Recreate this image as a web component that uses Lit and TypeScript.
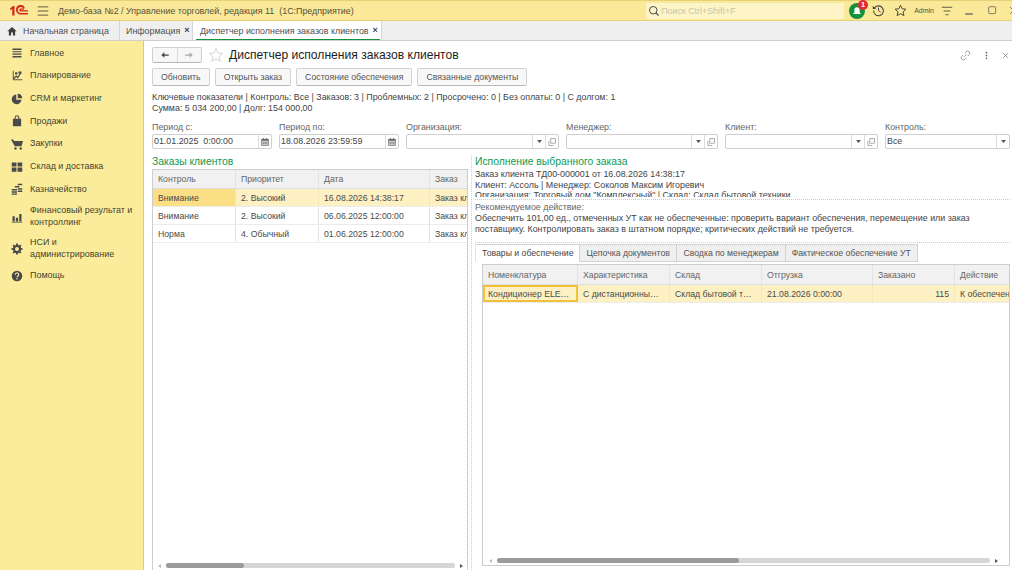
import { LitElement, html, css, svg } from "lit";
import { customElement } from "lit/decorators.js";

const ic = (body: unknown, size = 12, vb = 16) =>
  html`<svg width=${size} height=${size} viewBox="0 0 ${vb} ${vb}">${body}</svg>`;

const navIcons: Record<string, unknown> = {
  menu: svg`<path d="M2 2h12v2H2zM2 5.500h12v1.600H2zM2 8.700h12v1.600H2zM2 12h12v2H2z" fill="#4a4a4a"/>`,
  plan: svg`<path d="M3 1v12h12" fill="none" stroke="#4a4a4a" stroke-width="1.200"/><path d="M3 12l4-4 2 2 4-6" fill="none" stroke="#4a4a4a" stroke-width="1.600"/><rect x="5.500" y="3" width="3" height="3" fill="#4a4a4a"/><rect x="10" y="2" width="4" height="3" fill="#4a4a4a"/>`,
  crm: svg`<path d="M7 2a6.500 6.500 0 1 0 7 7H7z" fill="#4a4a4a"/><path d="M9 1a6 6 0 0 1 6 6H9z" fill="#4a4a4a"/>`,
  bag: svg`<path d="M2.500 5h11v10h-11z" fill="#4a4a4a"/><path d="M5.500 6V3.500a2.500 2.500 0 0 1 5 0V6" fill="none" stroke="#4a4a4a" stroke-width="1.400"/>`,
  cart: svg`<path d="M0 2h3l1 2h12l-2 7H5z" fill="#4a4a4a"/><circle cx="6" cy="14" r="1.600" fill="#4a4a4a"/><circle cx="13" cy="14" r="1.600" fill="#4a4a4a"/>`,
  wh: svg`<path d="M1 2h6.300v5.400H1zM8.700 2H15v5.400H8.700zM1 8.800h6.300v5.400H1zM8.700 8.800H15v5.400H8.700z" fill="#4a4a4a"/>`,
  cash: svg`<path d="M1 8h7v2H1zM1 11h7v2H1zM1 14h7v1.600H1zM5 4h6v2H5zM9 1h6v2H9zM9 7h6v2H9zM9 10h6v2H9z" fill="#4a4a4a"/>`,
  fin: svg`<path d="M2 7h3v7H2zM6.500 9h3v5h-3zM11 4h3v10h-3z" fill="#4a4a4a"/><path d="M1 15h14" stroke="#4a4a4a"/>`,
  gear: svg`<circle cx="8" cy="8" r="5.500" fill="#4a4a4a"/><path d="M8 .8v14.400M.8 8h14.400M2.900 2.900l10.200 10.200M13.100 2.900L2.900 13.100" stroke="#4a4a4a" stroke-width="2.600"/><circle cx="8" cy="8" r="2.600" fill="#fbec9b"/>`,
  help: svg`<circle cx="8" cy="8" r="7" fill="#4a4a4a"/><path d="M5.700 6.200a2.300 2.300 0 1 1 3.400 2c-.8.5-1.100.9-1.100 1.600" fill="none" stroke="#fbec9b" stroke-width="1.500"/><rect x="7.100" y="10.800" width="1.800" height="1.800" fill="#fbec9b"/>`,
};

const calendar = ic(svg`<path d="M2 3h12v11H2z" fill="#666"/><path d="M3 6h10v7H3z" fill="#ddd"/><path d="M4 7.500h2v1.500H4zM7 7.500h2v1.500H7zM10 7.500h2v1.500h-2zM4 10h2v1.500H4zM7 10h2v1.500H7zM10 10h2v1.500h-2z" fill="#666"/><path d="M5 1.500h1.400v2H5zM9.600 1.500H11v2H9.600z" fill="#666"/>`, 10);
const copy = ic(svg`<path d="M6 2.500h7.500V10H6z M3 6v7.500h7" fill="none" stroke="#888" stroke-width="1.100"/>`, 10);
const arrow = html`<svg width="5" height="3" viewBox="0 0 5 3"><path d="M0 0h5L2.500 3z" fill="#555"/></svg>`;

@customElement("app-root")
export class AppRoot extends LitElement {
  static styles = css`
    :host { display: block; width: 1024px; height: 581px; background: #fff; overflow: hidden;
      font-family: "Liberation Sans", Arial, sans-serif; font-size: 8.900px; color: #4a4a4a; }
    * { box-sizing: border-box; }
    .frame { width: 1012px; height: 570px; display: flex; flex-direction: column; overflow: hidden; background: #fff; }
    .top { height: 21px; flex: none; display: flex; align-items: center; background: #fbe99a;
      border-top: 1px solid #e6d277; border-bottom: 1px solid #e6d277; position: relative; }
    .logo { margin-left: 9px; width: 20px; height: 11px; flex: none; }
    .burger { margin-left: 8px; flex: none; display: flex; }
    .apptitle { margin-left: 9px; color: #55513a; white-space: nowrap; flex: 1; }
    .search { width: 198px; height: 16px; background: #fdf5c8; display: flex; align-items: center;
      padding-left: 2px; gap: 1px; color: #c9c5a4; flex: none; }
    .bell { margin-left: 5px; width: 16px; height: 16px; border-radius: 50%; background: #12923f; flex: none;
      position: relative; display: flex; align-items: center; justify-content: center; }
    .badge { position: absolute; top: -3px; right: -3px; width: 10px; height: 10px; border-radius: 50%;
      background: #e8262b; color: #fff; font-size: 7.500px; font-weight: bold; line-height: 10px; text-align: center; }
    .tool { flex: none; display: flex; }
    .hist { margin-left: 6.500px; }
    .starTop { margin-left: 9px; }
    .admin { margin-left: 7.500px; font-size: 7px; color: #55513a; flex: none; }
    .lines { margin-left: 7px; }
    .minb { margin-left: 10px; }
    .maxb { margin-left: 11.500px; }
    .closeb { margin-left: 10.500px; margin-right: -7px; }

    .tabs { height: 20px; flex: none; display: flex; background: #efefef; border-bottom: 1px solid #cfcfcf; }
    .tab { display: flex; align-items: center; padding: 0 6px; border-right: 1px solid #d5d5d5; white-space: nowrap; color: #4f4f4f; gap: 4px; }
    .tab.home { width: 120px; padding-left: 7px; gap: 6px; }
    .tab.info { width: 73px; }
    .tab.cur { width: 189px; background: #fff; position: relative; padding-left: 7px; }
    .tab.cur::after { content: ""; position: absolute; left: 3px; right: 1px; bottom: 0; height: 1px; background: #12923f; }
    .x { font-size: 9px; color: #444; line-height: 1; font-weight: bold; margin-left: auto; }

    .body { flex: 1; min-height: 0; display: flex; }
    .side { width: 144px; flex: none; background: #fbec9b; border-right: 1px solid #d9cb7c; padding-top: 1px; }
    .item { display: flex; align-items: center; padding: 5.700px 4px 5.700px 11px; color: #47442f; line-height: 11.300px; font-size: 8.950px; }
    .item.two { padding-top: 4.700px; padding-bottom: 4.700px; }
    .item .ico { width: 12px; height: 11px; flex: none; margin-right: 7px; display: flex; align-items: center; }

    .main { flex: 1; min-width: 0; padding: 6px 2px 0 8px; display: flex; flex-direction: column; }
    .titlerow { height: 16px; display: flex; align-items: center; flex: none; }
    .navg { width: 50px; height: 16px; border: 1px solid #cfcfcf; border-bottom-color: #b5b5b5; border-radius: 2px; display: flex; flex: none; background: #f7f7f7; }
    .navg span { flex: 1; display: flex; align-items: center; justify-content: center; }
    .navg span + span { border-left: 1px solid #d8d8d8; }
    .fav { margin: 0 5px 0 6px; display: flex; flex: none; }
    h1 { margin: 0; font-size: 12.100px; font-weight: normal; color: #1c1c1c; white-space: nowrap; flex: 1; line-height: 16px; }
    .acts { display: flex; align-items: center; gap: 10.500px; }
    .btns { display: flex; gap: 5px; margin-top: 5px; flex: none; }
    .btn { height: 18px; padding: 0 8px; border: 1px solid #d2d2d2; border-bottom-color: #b9b9b9; border-radius: 2px;
      background: #f8f8f8; display: flex; align-items: center; color: #555; white-space: nowrap; font-size: 8.750px; }
    .kpi { margin-top: 6px; line-height: 10.500px; color: #444; flex: none; white-space: nowrap; }
    .filters { display: grid; grid-template-columns: 120px 120px 153px 152px 153px 125px; column-gap: 7px; margin-top: 9px; flex: none; }
    .filters .f { display: flex; flex-direction: column; }
    .f label { line-height: 11px; color: #666; height: 12px; }
    .input { height: 15px; border: 1px solid #cfcfcf; border-radius: 2px; display: flex; align-items: stretch; background: #fff; color: #444; }
    .input .v { flex: 1; padding-left: 1px; line-height: 13px; white-space: pre; overflow: hidden; }
    .input .b { flex: none; width: 13px; border-left: 1px solid #dcdcdc; display: flex; align-items: center; justify-content: center; }

    .split { flex: 1; min-height: 0; display: flex; margin-top: 6px; }
    .left { width: 316px; flex: none; display: flex; flex-direction: column; }
    .gut { width: 4px; flex: none; border-right: 1px dotted #ccc; }
    .right { flex: 1; min-width: 0; padding-left: 3px; display: flex; flex-direction: column; }
    h2 { margin: 0; font-size: 10.350px; font-weight: normal; color: #0b9a50; line-height: 13px; height: 13px; flex: none; white-space: nowrap; }
    .left h2 { height: 14px; }
    .grid { flex: 1; min-height: 0; border: 1px solid #cdcdcd; display: flex; flex-direction: column; overflow: hidden; font-size: 8.700px; }
    .left .grid { border-bottom: 0; }
    .hr, .r { display: flex; flex: none; }
    .hr { height: 19px; background: #f1f1f1; border-bottom: 1px solid #dedede; color: #666; }
    .pane .hr { height: 20px; }
    .r { height: 18px; border-bottom: 1px solid #ececec; color: #4a4a4a; }
    .c { padding: 0 5px; border-right: 1px solid #e2e2e2; display: flex; align-items: center; white-space: nowrap; overflow: hidden; flex: none; }
    .c:last-child { border-right: 0; flex: 1; min-width: 0; }
    .c.num { justify-content: flex-end; }
    .r.sel { background: #fdf1c3; }
    .r.sel .c { border-right-color: #f4e8bb; }
    .c.focus { background: #fbdf85; }
    .c.cursor { background: #fdf1c3; outline: 2px solid #f2c13c; outline-offset: -2px; }
    .fill { flex: 1; }
    .sb { flex: none; display: flex; align-items: center; height: 9px; padding: 0 4px 0 5px; gap: 5px; }
    .pane .sb { padding: 0 11px 0 6px; }
    .sb .track { flex: 1; height: 5px; border-radius: 3px; background: #d6d6d6; }
    .sb .thumb { height: 5px; border-radius: 3px; background: #9b9b9b; }
    .sb i { flex: none; width: 0; height: 0; border-top: 2px solid transparent; border-bottom: 2px solid transparent; }
    .sb i.l { border-right: 3px solid #bbb; }
    .sb i.g { border-left: 3px solid #555; }

    .details { height: 28px; overflow: hidden; line-height: 10.500px; color: #444; flex: none; margin-top: 1px; white-space: nowrap; }
    .rec { border-top: 1px dotted #ccc; border-bottom: 1px dotted #ccc; margin-top: 2px; padding: 2px 0 0; height: 44px; flex: none; line-height: 10.500px; }
    .rec .h { color: #666; height: 11px; }
    .rec .t { color: #444; }
    .rtabs { display: flex; flex: none; margin-top: 1px; height: 18px; font-size: 8.700px; }
    .rt { height: 18px; padding: 0 6.500px; display: flex; align-items: center; background: #efefef; border: 1px solid #d2d2d2; border-left: 0; white-space: nowrap; color: #555; }
    .rt.tight { padding: 0 6px; }
    .rt.on { background: #fff; border-left: 1px solid #e2e2e2; border-bottom-color: #fff; color: #444; padding: 0 5.500px 0 6px; }
    .pane { flex: 1; min-height: 0; padding: 2px 0 0 7px; margin-bottom: 4px; display: flex; flex-direction: column; }
  `;

  render() {
    const menu: [string, string, boolean?][] = [
      ["menu", "Главное"], ["plan", "Планирование"], ["crm", "CRM и маркетинг"], ["bag", "Продажи"],
      ["cart", "Закупки"], ["wh", "Склад и доставка"], ["cash", "Казначейство"],
      ["fin", "Финансовый результат и контроллинг", true], ["gear", "НСИ и администрирование", true], ["help", "Помощь"],
    ];
    const lw = [83, 83, 111, 37];
    const rows = [
      ["Внимание", "2. Высокий", "16.08.2026 14:38:17", "Заказ клиента"],
      ["Внимание", "2. Высокий", "06.06.2025 12:00:00", "Заказ клиента"],
      ["Норма", "4. Обычный", "01.06.2025 12:00:00", "Заказ клиента"],
    ];
    const rw = [95, 92, 92, 111, 82, 60];
    const field = (label: string, val: string, extras: unknown[]) => html`
      <div class="f"><label>${label}</label>
        <div class="input"><span class="v">${val}</span>${extras.map((e) => html`<span class="b">${e}</span>`)}</div></div>`;

    return html`<div class="frame">
      <div class="top">
        <svg class="logo" viewBox="0 0 20 11"><path d="M1 3.500l3-2.500h1.500v9.500H3.300V4L1.500 5.300z" fill="#d8261c"/><path d="M16 3.200A4.600 4.600 0 0 0 7 4.500c0 3.300 2.400 5 4.800 5H19V8h-7.200C9.800 8 8.800 6.500 8.800 5c0-2 1.500-3 3-3 1.200 0 2 .5 2.500 1.500zM11.800 3.600c-1 0-1.600.7-1.600 1.400 0 .9.700 1.500 1.600 1.500H19V5.300h-7c-.3 0-.4-.1-.4-.3s.2-.3.4-.3h2.900l-.2-1.100z" fill="#d8261c"/></svg>
        <span class="burger">${ic(svg`<path d="M1 2.500h14M1 8h14M1 13.500h14" stroke="#5c5842" stroke-width="1.300"/>`, 12)}</span>
        <span class="apptitle">Демо-база №2 / Управление торговлей, редакция 11 &nbsp;(1С:Предприятие)</span>
        <div class="search">${ic(svg`<circle cx="7" cy="7" r="5" fill="none" stroke="#444" stroke-width="1.300"/><path d="M10.500 10.500l3.500 3.500" stroke="#444" stroke-width="1.600"/>`, 12)}<span>Поиск Ctrl+Shift+F</span></div>
        <div class="bell">${ic(svg`<path d="M8 3a3.500 3.500 0 0 1 3.500 3.500V10l2 2h-11l2-2V6.500A3.500 3.500 0 0 1 8 3z" fill="#fff"/>`, 12)}<span class="badge">1</span></div>
        <span class="tool hist">${ic(svg`<path d="M3 5a6 6 0 1 1-1 3" fill="none" stroke="#444" stroke-width="1.300"/><path d="M1 2v4h4z" fill="#444"/><path d="M8 4.500V8l2.500 2" fill="none" stroke="#444" stroke-width="1.200"/>`, 13)}</span>
        <span class="tool starTop">${ic(svg`<path d="M8 1.500l2 4.400 4.700.5-3.500 3.200 1 4.700L8 11.900l-4.200 2.400 1-4.700L1.300 6.400 6 5.900z" fill="none" stroke="#444" stroke-width="1.200"/>`, 13)}</span>
        <span class="admin">Admin</span>
        <span class="tool lines">${ic(svg`<path d="M1 3h14M3.500 8h9M6 13h4" stroke="#5c5842" stroke-width="1.300"/>`, 12)}</span>
        <span class="tool minb">${ic(svg`<path d="M3 12h10" stroke="#555" stroke-width="1.600"/>`, 12)}</span>
        <span class="tool maxb">${ic(svg`<rect x="2.500" y="2.500" width="10" height="10" rx="1" fill="none" stroke="#666" stroke-width="1.200"/>`, 11)}</span>
        <span class="tool closeb">${ic(svg`<path d="M3 3l10 10M13 3L3 13" stroke="#666" stroke-width="1.200"/>`, 11)}</span>
      </div>
      <div class="tabs">
        <div class="tab home">${ic(svg`<path d="M8 1.500L.5 8.500h2.500V15h3.500v-4.500h3V15H13V8.500h2.500z" fill="#3d3d3d"/>`, 10)}<span>Начальная страница</span></div>
        <div class="tab info"><span>Информация</span><span class="x">×</span></div>
        <div class="tab cur"><span>Диспетчер исполнения заказов клиентов</span><span class="x">×</span></div>
      </div>
      <div class="body">
        <nav class="side">
          ${menu.map(([i, t, two]) => html`<div class="item ${two ? "two" : ""}"><span class="ico">${ic(navIcons[i])}</span><span>${t}</span></div>`)}
        </nav>
        <main class="main">
          <div class="titlerow">
            <div class="navg">
              <span>${ic(svg`<path d="M2 8l5-4.500V7h7v2H7v3.500z" fill="#444"/>`, 10)}</span>
              <span>${ic(svg`<path d="M14 8L9 3.500V7H2v2h7v3.500z" fill="#aaa"/>`, 10)}</span>
            </div>
            <span class="fav">${ic(svg`<path d="M8 1.500l2 4.400 4.700.5-3.500 3.200 1 4.700L8 11.900l-4.200 2.400 1-4.700L1.300 6.400 6 5.900z" fill="none" stroke="#d0d0d0" stroke-width=".9"/>`, 16)}</span>
            <h1>Диспетчер исполнения заказов клиентов</h1>
            <div class="acts">
              ${ic(svg`<path d="M6.500 9.500l3-3M7 4.500l2-2a3 3 0 0 1 4.300 4.300l-2 2M9 11.500l-2 2a3 3 0 0 1-4.300-4.300l2-2" fill="none" stroke="#888" stroke-width="1.200"/>`, 11)}
              ${ic(svg`<circle cx="8" cy="3" r="1.500" fill="#666"/><circle cx="8" cy="8" r="1.500" fill="#666"/><circle cx="8" cy="13" r="1.500" fill="#666"/>`, 9)}
              ${ic(svg`<path d="M4 4l8 8M12 4l-8 8" stroke="#777" stroke-width="1.300"/>`, 9)}
            </div>
          </div>
          <div class="btns">
            <div class="btn">Обновить</div>
            <div class="btn">Открыть заказ</div>
            <div class="btn">Состояние обеспечения</div>
            <div class="btn">Связанные документы</div>
          </div>
          <div class="kpi">Ключевые показатели | Контроль: Все | Заказов: 3 | Проблемных: 2 | Просрочено: 0 | Без оплаты: 0 | С долгом: 1<br />Сумма: 5 034 200,00 | Долг: 154 000,00</div>
          <div class="filters">
            ${field("Период с:", "01.01.2025  0:00:00", [calendar])}
            ${field("Период по:", "18.08.2026 23:59:59", [calendar])}
            ${field("Организация:", "", [arrow, copy])}
            ${field("Менеджер:", "", [arrow, copy])}
            ${field("Клиент:", "", [arrow, copy])}
            ${field("Контроль:", "Все", [arrow])}
          </div>
          <div class="split">
            <section class="left">
              <h2>Заказы клиентов</h2>
              <div class="grid">
                <div class="hr">${["Контроль", "Приоритет", "Дата", "Заказ"].map((t, i) => html`<div class="c" style="width:${lw[i]}px">${t}</div>`)}</div>
                ${rows.map((r, ri) => html`<div class="r ${ri === 0 ? "sel" : ""}">${r.map((t, i) => html`<div class="c ${ri === 0 && i === 0 ? "focus" : ""}" style="width:${lw[i]}px">${t}</div>`)}</div>`)}
                <div class="fill"></div>
                <div class="sb"><i class="l"></i><div class="track"><div class="thumb" style="width:27%"></div></div><i class="g"></i></div>
              </div>
            </section>
            <div class="gut"></div>
            <section class="right">
              <h2>Исполнение выбранного заказа</h2>
              <div class="details">Заказ клиента ТД00-000001 от 16.08.2026 14:38:17<br />Клиент: Ассоль | Менеджер: Соколов Максим Игоревич<br />Организация: Торговый дом "Комплексный" | Склад: Склад бытовой техники</div>
              <div class="rec">
                <div class="h">Рекомендуемое действие:</div>
                <div class="t">Обеспечить 101,00 ед., отмеченных УТ как не обеспеченные: проверить вариант обеспечения, перемещение или заказ<br />поставщику. Контролировать заказ в штатном порядке; критических действий не требуется.</div>
              </div>
              <div class="rtabs">
                <div class="rt on">Товары и обеспечение</div>
                <div class="rt">Цепочка документов</div>
                <div class="rt tight">Сводка по менеджерам</div>
                <div class="rt tight">Фактическое обеспечение УТ</div>
              </div>
              <div class="pane">
                <div class="grid">
                  <div class="hr">${["Номенклатура", "Характеристика", "Склад", "Отгрузка", "Заказано", "Действие"].map((t, i) => html`<div class="c" style="width:${rw[i]}px">${t}</div>`)}</div>
                  <div class="r sel">
                    ${["Кондиционер ELE…", "С дистанционны…", "Склад бытовой т…", "21.08.2026 0:00:00", "115", "К обеспечению"].map((t, i) => html`<div class="c ${i === 0 ? "cursor" : ""} ${i === 4 ? "num" : ""}" style="width:${rw[i]}px">${t}</div>`)}
                  </div>
                  <div class="fill"></div>
                  <div class="sb"><i class="l"></i><div class="track"><div class="thumb" style="width:49%"></div></div><i class="g"></i></div>
                </div>
              </div>
            </section>
          </div>
        </main>
      </div>
    </div>`;
  }
}
